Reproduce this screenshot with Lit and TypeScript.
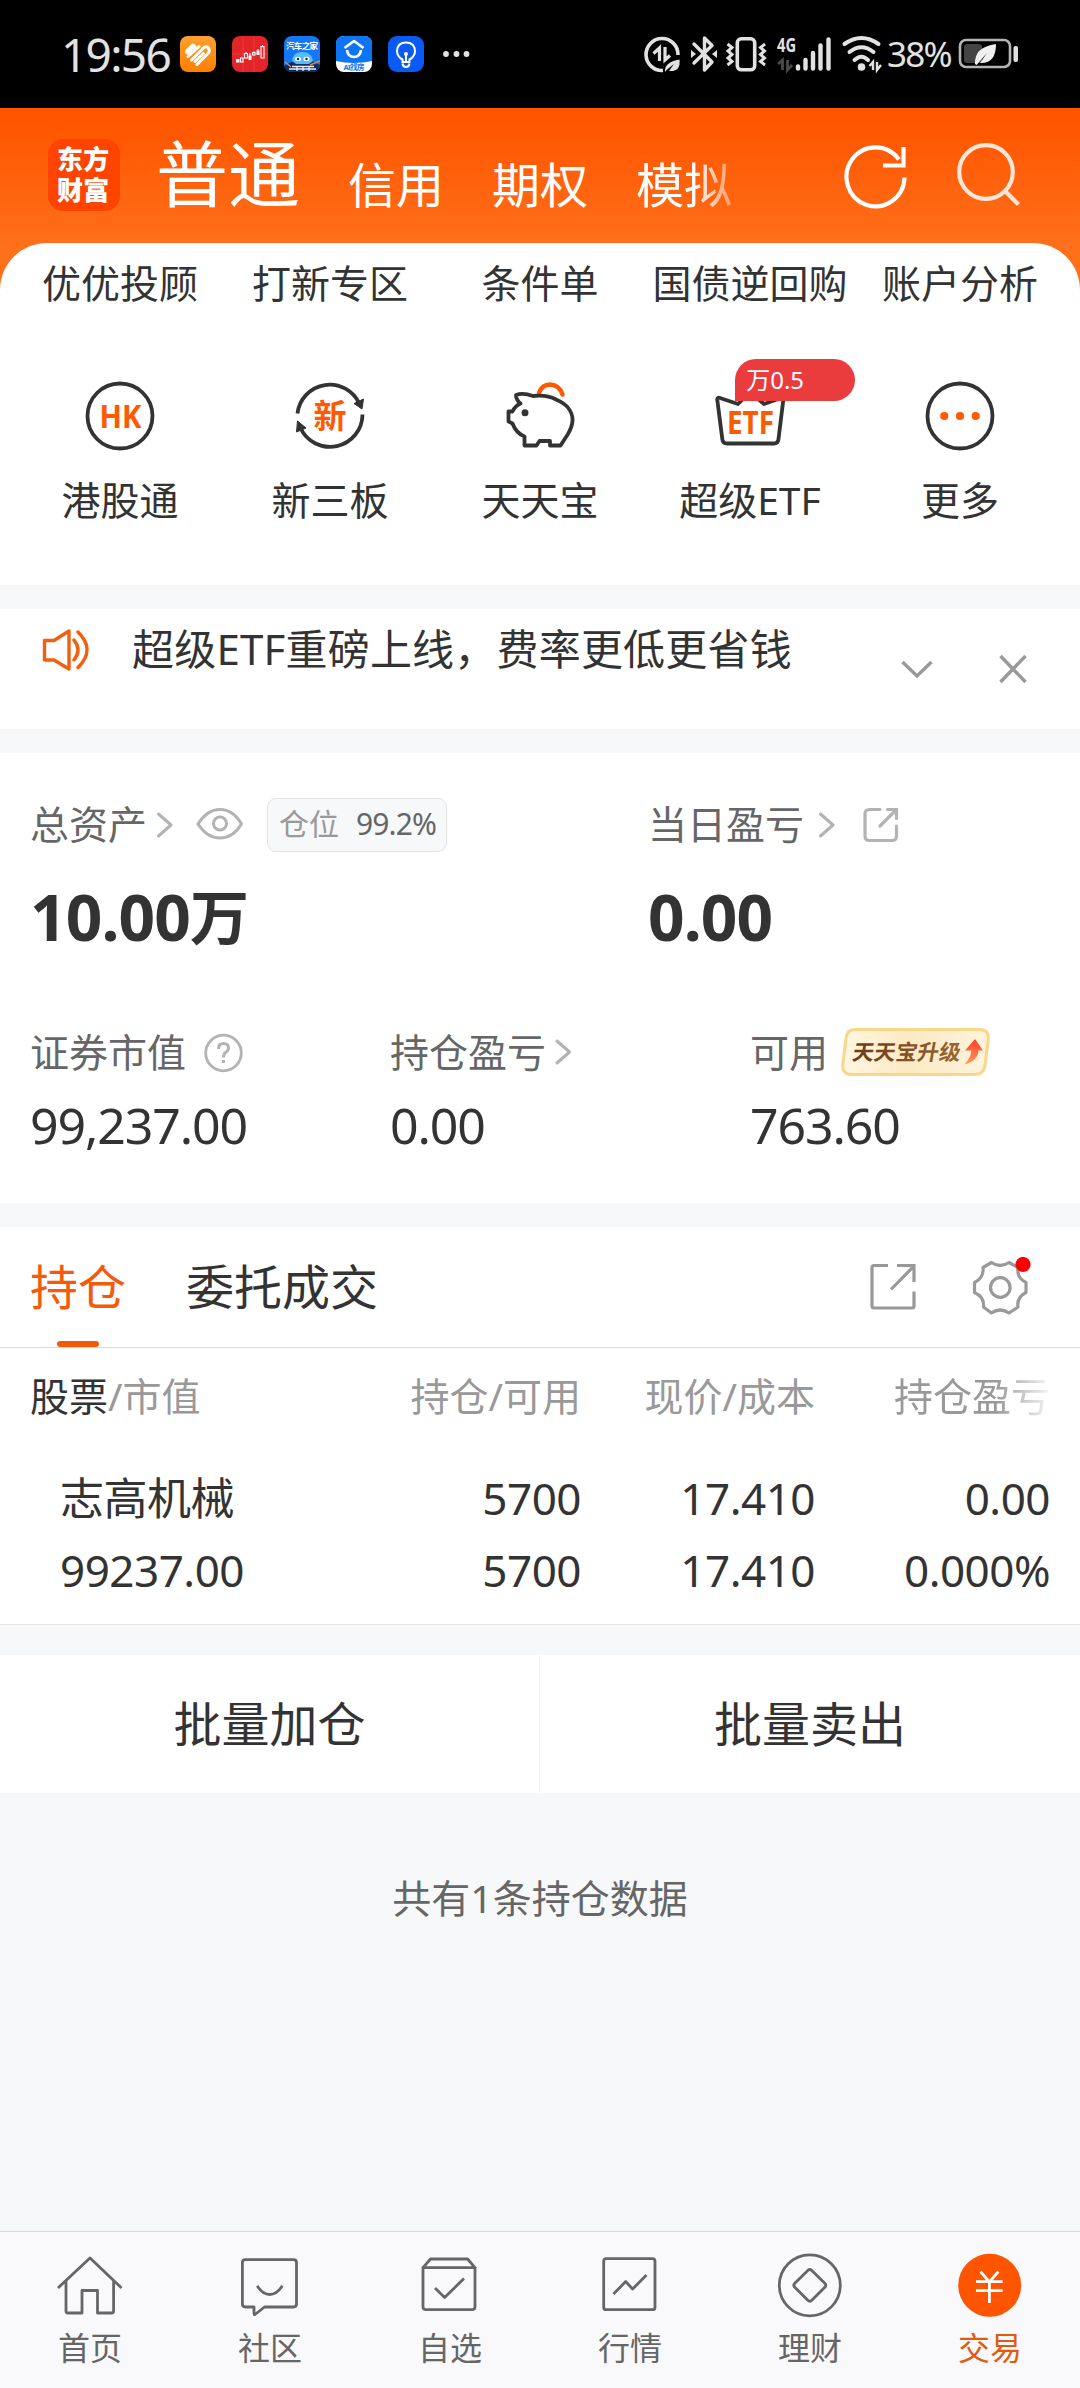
import { LitElement, html, css, svg } from "lit";
import { customElement } from "lit/decorators.js";
import { classMap } from "lit/directives/class-map.js";

const FONT = css`"Noto Sans", "Noto Sans CJK SC", sans-serif`;

@customElement("status-bar")
class StatusBar extends LitElement {
  static styles = css`
    :host { display: flex; height: 108px; background: #000; color: #e2e2e2; font-family: ${FONT}; align-items: center; justify-content: space-between; padding: 0 60px 0 61px; box-sizing: border-box; }
    svg { display: block; flex: none; overflow: visible; }
    .left, .right { display: flex; align-items: center; }
    .time { font-size: 46px; line-height: 60px; letter-spacing: -1.7px; width: 119px; white-space: nowrap; }
    .apps { display: flex; gap: 16px; }
    .dots { margin-left: 18px; }
    .bt { margin-left: 11px; }
    .vib { margin-left: 9px; }
    .cell { margin-left: 10px; }
    .wifi { margin-left: 9px; }
    .pct { font-size: 35px; line-height: 44px; letter-spacing: -1.8px; margin-left: 4px; width: 71px; white-space: nowrap; }
    text { font-family: ${FONT}; font-weight: 700; }
  `;
  render() {
    return html`
      <div class="left">
        <div class="time">19:56</div>
        <div class="apps">
          <svg width="36" height="36" viewBox="0 0 36 36">
            <defs><linearGradient id="o" x1="0" y1="0" x2="0" y2="1"><stop offset="0" stop-color="#ffa031" /><stop offset="1" stop-color="#ff7f00" /></linearGradient></defs>
            <rect width="36" height="36" rx="8" fill="url(#o)" />
            <g stroke="#fff" stroke-linecap="round" fill="none">
              <path d="M8.500 15.500L13 11" stroke-width="6.500" />
              <path d="M8 20.500L19 10.500M11.500 24L22.500 13Q26 9 28.500 12Q30.500 15 27.500 18L17 28.500M15 25.500L23.500 17.500" stroke-width="3" />
            </g>
          </svg>
          <svg width="36" height="36" viewBox="0 0 36 36">
            <rect width="36" height="36" rx="8" fill="#e32428" />
            <path d="M11 0V36M22 0V36M0 18H36" stroke="#ec4a4a" stroke-width=".6" />
            <g fill="#fff"><rect x="4" y="23" width="3.500" height="3.500" /><rect x="16.500" y="19.500" width="3" height="4.500" /><rect x="24.500" y="14.500" width="3" height="4.500" /><path d="M14 16V18M22 15.500V17M30.500 9V11M26 13V15M18 17V24" stroke="#fff" /></g>
            <g fill="none" stroke="#fff" stroke-width="1.100"><rect x="8.500" y="22" width="2.500" height="4" /><rect x="12.500" y="17.500" width="3" height="4.500" /><rect x="20.500" y="16.500" width="2.500" height="2.500" /><rect x="29" y="10.500" width="3" height="11.500" /></g>
          </svg>
          <svg width="36" height="36" viewBox="0 0 36 36">
            <defs><clipPath id="c"><rect width="36" height="36" rx="8" /></clipPath></defs>
            <g clip-path="url(#c)">
              <rect width="36" height="36" fill="#1677f5" />
              <path d="M0 30L9 25H28L36 29V36H0Z" fill="#0b2d63" />
              <path d="M8 25Q9 16 18 16Q28 16 29 25L25 28H12Z" fill="#55bdf7" />
              <ellipse cx="14" cy="23" rx="3" ry="2.200" fill="#fff" /><ellipse cx="22.500" cy="23" rx="3" ry="2.200" fill="#fff" />
              <circle cx="14" cy="23" r="1.200" fill="#123" /><circle cx="22.500" cy="23" r="1.200" fill="#123" />
              <path d="M1 26L7 31M36 25L26 29" stroke="#e08b3c" stroke-width="1.400" />
              <text x="2" y="12.500" font-size="8.500" fill="#fff" textLength="32">汽车之家</text>
              <path d="M5 33H32M8 30.500H30M13 30V35M19 30V35M25 30V35" stroke="#e8eef7" stroke-width="1.300" />
            </g>
          </svg>
          <svg width="36" height="36" viewBox="0 0 36 36">
            <rect width="36" height="36" rx="8" fill="#fff" />
            <path d="M0 25V8Q0 0 8 0H28Q36 0 36 8V25Q18 29 0 25Z" fill="#0d74f7" />
            <path d="M8.500 12L18 5L27.500 12" fill="none" stroke="#fff" stroke-width="2.600" stroke-linejoin="round" />
            <path d="M11 14Q12 21 18 21Q24 21 25 14" fill="none" stroke="#fff" stroke-width="2.600" />
            <text x="7.500" y="34" font-size="7.500" fill="#0d74f7" textLength="21">AI找房</text>
          </svg>
          <svg width="36" height="36" viewBox="0 0 36 36">
            <rect width="36" height="36" rx="9" fill="#0a5af5" />
            <path d="M14.500 26V23.500Q9 20.500 9 15Q9.500 6.500 18 6.500Q26.500 6.500 27 15Q27 20.500 21.500 23.500V26ZM18 26V18M14.500 27.500Q15 31 18 31Q21 31 21.500 27.500" fill="none" stroke="#fff" stroke-width="2" />
            <circle cx="18" cy="18" r="2" fill="#fff" />
          </svg>
        </div>
        <svg class="dots" width="30" height="10" viewBox="0 0 30 10" fill="#e2e2e2"><circle cx="4" cy="5" r="2.900" /><circle cx="14.500" cy="5" r="2.900" /><circle cx="24.500" cy="5" r="2.900" /></svg>
      </div>
      <div class="right">
        <svg width="36" height="38" viewBox="0 0 36 38">
          <path d="M19 35.500A16 16 0 1 1 34 20" fill="none" stroke="#e2e2e2" stroke-width="3.600" />
          <path d="M15.500 26V13L9.500 18.500M21 12V25L26 20.500" fill="none" stroke="#e2e2e2" stroke-width="3.200" />
          <path d="M21 37Q20 27 35.500 24.500Q37 37 25 36L30 29L22.500 35Z" fill="#e2e2e2" />
        </svg>
        <svg class="bt" width="26" height="38" viewBox="0 0 26 38">
          <path d="M3 9L21 27L13.500 35V3L21 10.500L3 28" fill="none" stroke="#e2e2e2" stroke-width="3.400" stroke-linejoin="round" stroke-linecap="round" />
          <path d="M0 15L5 19L0 23ZM26 15L21 19L26 23Z" fill="#e2e2e2" />
        </svg>
        <svg class="vib" width="41" height="38" viewBox="0 0 41 38" fill="none" stroke="#e2e2e2">
          <rect x="11.300" y="3.800" width="17.400" height="31" rx="4" stroke-width="3.600" />
          <path d="M1.500 9L6 12.500L2 16L6 19.500L2 23L6 26.500L1.500 30M39 9L34.500 12.500L38.500 16L34.500 19.500L38.500 23L34.500 26.500L39 30" stroke-width="3" />
        </svg>
        <svg class="cell" width="56" height="38" viewBox="0 0 56 38">
          <text x="0" y="17" font-size="20" fill="#e2e2e2" textLength="19" lengthAdjust="spacingAndGlyphs">4G</text>
          <path d="M5.500 35V25L1 29M10.500 25V35L15 30" fill="none" stroke="#4a4a4a" stroke-width="2.800" />
          <g stroke="#e2e2e2" stroke-width="4.400" stroke-linecap="round"><path d="M21 31.500V33.500M28.500 25V33.500M36 18V33.500M43.500 10.500V33.500M51.500 4.500V33.500" /></g>
        </svg>
        <svg class="wifi" width="41" height="38" viewBox="0 0 41 38">
          <g fill="none" stroke="#e2e2e2" stroke-width="4" stroke-linecap="round"><path d="M2.500 9Q19.500 -3 36.500 9M7.500 17Q19.500 7.500 31.500 17M12.500 25Q19.500 18.500 26 25" /></g>
          <circle cx="19.500" cy="32" r="3.800" fill="#e2e2e2" />
          <path d="M31 35V27L27.500 31M35 27V35L39 30" fill="none" stroke="#e2e2e2" stroke-width="2.400" />
        </svg>
        <div class="pct">38%</div>
        <svg width="62" height="32" viewBox="0 0 62 32">
          <rect x="2" y="2" width="50" height="27" rx="6" fill="none" stroke="#b4b4b4" stroke-width="2.600" />
          <rect x="6" y="6" width="18" height="19" rx="3" fill="#444" />
          <path d="M17 26Q16 9 38 6Q38 26 22 25L29 15L18.500 27Z" fill="#f0f0f0" />
          <rect x="55.500" y="8" width="4.500" height="16" rx="2" fill="#e2e2e2" />
        </svg>
      </div>
    `;
  }
}

interface NavItem { label: string; icon: unknown; active?: boolean }

@customElement("bottom-nav")
class BottomNav extends LitElement {
  static styles = css`
    :host { display: grid; grid-template-columns: repeat(6, 1fr); height: 157px; box-sizing: border-box; background: #f9f9fb; border-top: 1px solid #dcdcdc; font-family: ${FONT}; }
    .item { display: flex; flex-direction: column; align-items: center; padding-top: 17px; color: #666; }
    .item svg { display: block; fill: none; stroke: #666; stroke-width: 2.800; stroke-linecap: square; stroke-linejoin: round; }
    .label { font-size: 32px; line-height: 40px; margin-top: 7px; }
    .active { color: #e2590f; }
    .active svg { stroke: #fff; stroke-linecap: butt; }
  `;
  private items: NavItem[] = [
    { label: "首页", icon: svg`<path d="M5 38L36 9L66.500 38M12 33V62Q12 64 14 64H28V41.500H43.500V64H57.600Q59.600 64 59.600 62V33" />` },
    { label: "社区", icon: svg`<path d="M11.400 10.700H59.500Q62.500 10.700 62.500 13.700V55Q62.500 58 59.500 58H30.500L21 65.500Q20 66 20 64V58H11.400Q8.400 58 8.400 55V13.700Q8.400 10.700 11.400 10.700Z" /><path d="M24 38Q29 45.500 35.700 45.500Q42.500 45.500 47.500 38" />` },
    { label: "自选", icon: svg`<path d="M9 18.700H61V57.700Q61 60.700 58 60.700H12Q9 60.700 9 57.700V18.700L16.500 10H53.600L61 18.700M22 40L30.600 48.500L49 30.500" />` },
    { label: "行情", icon: svg`<rect x="9.700" y="9.700" width="51.300" height="51" rx="2.500" /><path d="M20.500 44L31.700 32.500L38.600 40L51.500 27" />` },
    { label: "理财", icon: svg`<circle cx="35.800" cy="36.300" r="30.500" /><path d="M33.800 21.500Q35.800 19.500 37.800 21.500L50.800 34.300Q52.800 36.300 50.800 38.300L37.800 51.300Q35.800 53.300 33.800 51.300L20.800 38.300Q18.800 36.300 20.800 34.300Z" />` },
    { label: "交易", active: true, icon: svg`<circle cx="35.700" cy="36.300" r="31.500" fill="#ff5500" stroke="none" /><path d="M22 32.700H48.700M22 41.700H48.700M35.400 32.700V54M26.500 22.700L35.400 33L44.300 22.700" />` },
  ];
  render() {
    return this.items.map(
      (i) => html`<div class=${classMap({ item: true, active: !!i.active })}>
        <svg width="72" height="72" viewBox="0 0 72 72">${i.icon}</svg>
        <div class="label">${i.label}</div>
      </div>`
    );
  }
}

@customElement("app-root")
class AppRoot extends LitElement {
  static styles = css`
    :host { display: flex; flex-direction: column; width: 1080px; height: 2388px; overflow: hidden; background: #f7f8fa; font-family: ${FONT}; color: #333; font-size: 39px; }
    svg { display: block; flex: none; }
    status-bar, bottom-nav, .hero, .section { flex: none; }

    .hero { background: linear-gradient(#ff5500 0, #ff5500 15px, #ff701a 140px); }
    .top { height: 135px; display: flex; align-items: flex-start; padding-left: 48px; color: #fff; box-sizing: border-box; }
    .logo { width: 72px; height: 72px; box-sizing: border-box; padding: 5px 10px 0 9px; margin-top: 31px; border-radius: 15px; background: #ff4400; font-size: 26px; line-height: 30.500px; font-weight: 900; letter-spacing: .2px; word-break: break-all; flex: none; }
    .tabs { display: flex; gap: 48px; margin-left: 36px; width: 600px; white-space: nowrap; font-size: 48px; line-height: 60px; padding-top: 47px; box-sizing: border-box; }
    .big { font-size: 72px; line-height: 80px; margin-top: -22px; }
    .fade { -webkit-mask-image: linear-gradient(90deg, #000 60%, rgba(0, 0, 0, .35)); mask-image: linear-gradient(90deg, #000 60%, rgba(0, 0, 0, .35)); }
    .refresh { margin: 31px 0 0 84px; }
    .search { margin: 31px 0 0 39px; }

    .menu { background: #fff; border-radius: 47px 47px 0 0; height: 342px; box-sizing: border-box; padding: 15px 15px 0; }
    .grid { display: grid; grid-template-columns: repeat(5, 210px); justify-items: center; white-space: nowrap; line-height: 50px; }
    .icons { margin-top: 70px; }
    .cell { position: relative; display: flex; flex-direction: column; align-items: center; }
    .cell .name { margin-top: 21px; }
    .cell text { font-weight: 700; fill: #ff5a00; }
    .ribbon { position: absolute; left: 56px; top: -19px; width: 120px; height: 42px; box-sizing: border-box; padding-left: 11px; background: #ea3c3c; color: #fff; border-radius: 21px 21px 21px 0; font-size: 24px; line-height: 41px; }

    .section { background: #fff; margin-top: 24px; }
    .notice { height: 120px; display: flex; align-items: flex-start; box-sizing: border-box; padding: 20px 50px 0 42px; font-size: 42px; line-height: 40px; }
    .notice .msg { margin-left: 42px; width: 768px; white-space: nowrap; letter-spacing: .2px; }
    .notice .down { margin-top: 30px; }
    .notice .close { margin: 24px 0 0 64px; }

    .assets { height: 450px; box-sizing: border-box; padding: 44px 30px 0; color: #666; line-height: 54px; }
    .two { display: grid; grid-template-columns: 618px 1fr; }
    .three { display: grid; grid-template-columns: 360px 360px 1fr; margin-top: 68px; }
    .row { display: flex; align-items: center; height: 54px; white-space: nowrap; }
    .eye { margin-left: 20px; }
    .pos { display: flex; margin-left: 24px; width: 180px; height: 54px; box-sizing: border-box; border: 1px solid #e3e3e6; border-radius: 9px; background: #f7f8fa; font-size: 30px; line-height: 50px; padding-left: 11px; color: #999; margin-top: 2px; }
    .pos .num { color: #666; margin-left: 17px; font-size: 30px; letter-spacing: -.9px; }
    .total { font-size: 64px; font-weight: 700; color: #333; line-height: 80px; margin-top: 26px; letter-spacing: -.9px; display: flex; }
    .total .unit { font-size: 59px; }
    .value { font-size: 50px; color: #333; line-height: 60px; margin-top: 16px; letter-spacing: -1.100px; }
    .up { margin-left: 13px; width: 149px; height: 50px; }
    .up text { font-weight: 700; font-size: 21.500px; }

    .hold { height: 398px; box-sizing: border-box; border-bottom: 1px solid #e6e6e6; }
    .bar { height: 121px; display: flex; box-sizing: border-box; border-bottom: 1px solid #dcdcdc; padding: 0 48px 0 30px; font-size: 48px; line-height: 120px; }
    .tab { margin-right: 60px; height: 120px; }
    .on { color: #f45a0a; display: flex; flex-direction: column; align-items: center; }
    .on i { width: 42px; height: 6px; border-radius: 3px; background: #f45a0a; margin-top: -6px; }
    .tools { display: flex; margin-left: auto; padding-top: 30px; gap: 54px; }
    .table { display: grid; grid-template-columns: 252px 299px 234px 235px; padding: 0 30px; text-align: right; white-space: nowrap; }
    .table div:first-child { text-align: left; }
    .head { color: #999; line-height: 50px; padding-top: 23px; }
    .head b { font-weight: 400; color: #333; }
    .head .fadeout { -webkit-mask-image: linear-gradient(90deg, #000 65%, rgba(0, 0, 0, .1)); mask-image: linear-gradient(90deg, #000 65%, rgba(0, 0, 0, .1)); }
    .line { font-size: 44px; line-height: 72px; letter-spacing: -.5px; }
    .line div:first-child { padding-left: 30px; }
    .first { margin-top: 41px; }

    .actions { display: grid; grid-template-columns: 1fr 1fr; margin-top: 30px; height: 138px; font-size: 48px; line-height: 138px; text-align: center; background: #fff; flex: none; }
    .actions div:first-child { border-right: 1px solid #f5f5f6; }
    .count { color: #666; text-align: center; line-height: 50px; margin-top: 80px; flex: 1; }
  `;

  render() {
    return html`
      <status-bar></status-bar>
      <div class="hero">
        <div class="top">
          <div class="logo">东方财富</div>
          <div class="tabs"><span class="big">普通</span><span>信用</span><span>期权</span><span class="fade">模拟</span></div>
          <svg class="refresh" width="72" height="72" viewBox="0 0 72 72" fill="none" stroke="#fff" stroke-width="4.200">
            <path d="M64.500 38.500A29 29.500 0 1 1 59 20.500M63.500 8V26.500H43" />
          </svg>
          <svg class="search" width="72" height="72" viewBox="0 0 72 72" fill="none" stroke="#ffe6d8" stroke-width="4.200">
            <circle cx="35" cy="33" r="26.800" /><path d="M54 52L67.500 65.500" />
          </svg>
        </div>
        <div class="menu">
          <div class="grid"><span>优优投顾</span><span>打新专区</span><span>条件单</span><span>国债逆回购</span><span>账户分析</span></div>
          <div class="grid icons">
            <div class="cell">
              <svg width="76" height="76" viewBox="0 0 76 76"><circle cx="38" cy="38" r="32.500" fill="none" stroke="#333" stroke-width="3.800" />
                <text x="17.500" y="49.500" font-size="32" textLength="42" lengthAdjust="spacingAndGlyphs">HK</text></svg>
              <span class="name">港股通</span>
            </div>
            <div class="cell">
              <svg width="76" height="76" viewBox="0 0 76 76"><path d="M5.500 35.500A32.500 32.500 0 0 1 67.500 26M70.500 36.500A32.500 32.500 0 0 1 8.500 50" fill="none" stroke="#333" stroke-width="3.800" />
                <path d="M70 31L62 25.500L71.500 21ZM5.500 43L4.500 54L14 50Z" fill="#333" stroke="#333" />
                <text x="21.500" y="50" font-size="33">新</text></svg>
              <span class="name">新三板</span>
            </div>
            <div class="cell">
              <svg width="76" height="76" viewBox="0 0 76 76" fill="none" stroke-linejoin="round" stroke-linecap="round">
                <path d="M37 15Q40 6.500 48 6.500Q57.500 7 60.500 16.500" stroke="#ff5a00" stroke-width="4.500" />
                <path d="M14 17Q21 14.500 31 18Q45 16.500 54 21.500C65 26 71 34 70.500 43Q70 49 66 56L58.500 67.500H48V63H37.500L34.500 67.500H22.500V58.500Q14 55 10.500 45.500L6.500 43.500V33.500H10.500Q13 28 18.500 25.500Q14 22 14 17Z" stroke="#333" stroke-width="3.800" />
                <circle cx="23" cy="34.700" r="3.500" fill="#333" /></svg>
              <span class="name">天天宝</span>
            </div>
            <div class="cell">
              <svg width="76" height="76" viewBox="0 0 76 76"><path d="M52 26L69 20Q71.500 19.500 71.300 22L66.500 61Q66 65.500 62 65.500H15Q10.800 65.500 10.300 61L5.300 22Q5 19 8 20L26 26L38 14Z" fill="none" stroke="#333" stroke-width="3.800" stroke-linejoin="round" />
                <text x="15" y="55.500" font-size="32" textLength="47" lengthAdjust="spacingAndGlyphs">ETF</text></svg>
              <span class="ribbon">万0.5</span>
              <span class="name">超级ETF</span>
            </div>
            <div class="cell">
              <svg width="76" height="76" viewBox="0 0 76 76"><circle cx="38" cy="38" r="32.500" fill="none" stroke="#333" stroke-width="3.800" />
                <g fill="#ff5a00"><circle cx="22.300" cy="38" r="4.100" /><circle cx="38" cy="38" r="4.100" /><circle cx="53.700" cy="38" r="4.100" /></g></svg>
              <span class="name">更多</span>
            </div>
          </div>
        </div>
      </div>

      <div class="section notice">
        <svg width="48" height="42" viewBox="0 0 48 42" fill="none" stroke="#f0600f" stroke-width="3.400" stroke-linejoin="round" stroke-linecap="round">
          <path d="M2.500 11.500H12L27 2V40L12 31H2.500ZM32 11Q40 21 32 31M36 3Q54 20.500 36 38.500" />
        </svg>
        <div class="msg">超级ETF重磅上线，费率更低更省钱</div>
        <svg class="down" width="34" height="22" viewBox="0 0 34 22" fill="none" stroke="#999" stroke-width="3.400"><path d="M2.500 3L17 17L31.500 3" /></svg>
        <svg class="close" width="30" height="32" viewBox="0 0 30 32" fill="none" stroke="#999" stroke-width="3.400"><path d="M2.500 3L27.500 29M27.500 3L2.500 29" /></svg>
      </div>

      <div class="section assets">
        <div class="two">
          <div>
            <div class="row">总资产
              <svg width="28" height="28" viewBox="-9 0 28 28"><path d="M2.500 4L15 15L2.500 26" fill="none" stroke="#b3b3b3" stroke-width="3" stroke-linecap="round" stroke-linejoin="round" /></svg>
              <svg class="eye" width="48" height="34" viewBox="0 0 48 34" fill="none" stroke="#b3b3b3" stroke-width="3"><path d="M3 17Q12 2.500 25 2.500Q38 2.500 46.500 17Q38 31 25 31Q12 31 3 17Z" /><circle cx="25" cy="16.500" r="6.500" /></svg>
              <div class="pos">仓位<span class="num">99.2%</span></div>
            </div>
            <div class="total"><span>10.00</span><span class="unit">万</span></div>
          </div>
          <div>
            <div class="row">当日盈亏
              <svg width="36" height="28" viewBox="-14 0 36 28"><path d="M2.500 4L15 15L2.500 26" fill="none" stroke="#b3b3b3" stroke-width="3" stroke-linecap="round" stroke-linejoin="round" /></svg>
              <svg width="60" height="38" viewBox="-23 -1 60 38" fill="none" stroke="#b3b3b3" stroke-width="3.200" stroke-linecap="round"><path d="M17 3.500H6.500Q2 3.500 2 8V30Q2 34.500 6.500 34.500H29Q33.500 34.500 33.500 30V20M24.500 3.500H33.500V12.500M33 4L17 20" /></svg>
            </div>
            <div class="total">0.00</div>
          </div>
        </div>
        <div class="three">
          <div>
            <div class="row">证券市值
              <svg width="60" height="42" viewBox="-17 0 60 42" fill="none" stroke="#b3b3b3" stroke-width="2.800"><circle cx="20.500" cy="22" r="17.800" /><path d="M15.500 18Q15.500 12.500 20.500 12.500Q25.500 12.500 25.500 17Q25.500 19.500 22.500 21.500Q20.500 23 20.500 26.500M20.500 29V32" stroke-width="3" /></svg>
            </div>
            <div class="value">99,237.00</div>
          </div>
          <div>
            <div class="row">持仓盈亏
              <svg width="28" height="28" viewBox="-8 0 28 28"><path d="M3 3L15.500 14L3 25" fill="none" stroke="#b3b3b3" stroke-width="3" stroke-linecap="round" stroke-linejoin="round" /></svg>
            </div>
            <div class="value">0.00</div>
          </div>
          <div>
            <div class="row">可用
              <svg class="up" viewBox="0 0 149 50">
                <defs>
                  <linearGradient id="bg"><stop offset="0" stop-color="#fff6e2" /><stop offset=".45" stop-color="#fdeac4" /><stop offset="1" stop-color="#fff3dc" /></linearGradient>
                  <linearGradient id="tx" x1="0" y1="0" x2="1" y2="0"><stop offset="0" stop-color="#6b3c1c" /><stop offset="1" stop-color="#9b6630" /></linearGradient>
                  <linearGradient id="ar" x1="0" y1="0" x2="0" y2="1"><stop offset="0" stop-color="#ff3f28" /><stop offset="1" stop-color="#ff9a5c" /></linearGradient>
                </defs>
                <path d="M14 2.500H138Q148 2.500 147.300 12L144 38Q143 47.500 134 47.500H11Q1 47.500 1.700 38L5 12Q5.500 2.500 14 2.500Z" fill="url(#bg)" stroke="#f8d789" stroke-width="3" />
                <text x="0" y="0" transform="translate(10.500 33) skewX(-10)" fill="url(#tx)" textLength="108">天天宝升级</text>
                <path d="M134 12L142 23.500H137.500Q137 34 123 37.500Q129.500 32 130.500 23.500H124Z" fill="url(#ar)" />
              </svg>
            </div>
            <div class="value">763.60</div>
          </div>
        </div>
      </div>

      <div class="section hold">
        <div class="bar">
          <div class="tab on">持仓<i></i></div>
          <div class="tab">委托成交</div>
          <div class="tools">
            <svg width="50" height="60" viewBox="0 0 50 60" fill="none" stroke="#999" stroke-width="3.200"><path d="M20 8.500H6Q4 8.500 4 10.500V49Q4 51 6 51H44Q46 51 46 49V34.500M29 8.500H46V25M45.500 9.500L23 32.500" /></svg>
            <svg width="60" height="60" viewBox="0 0 60 60"><g fill="none" stroke="#999" stroke-width="3.200" stroke-linejoin="round">
                <path d="M19.500 5.500Q28 11.500 37 5.500L46 10.500Q44.500 21 54 25.500V35.500Q44.500 40 46 50L37 56Q28 50 19.500 56L11.500 50Q12.500 40 2.500 35.500V25.500Q12 21 11 10.500Z" /><circle cx="28.300" cy="30.500" r="9.800" /></g>
              <circle cx="51" cy="7.500" r="7.600" fill="#f00" /></svg>
          </div>
        </div>
        <div class="table head">
          <div><b>股票</b>/市值</div><div>持仓/可用</div><div>现价/成本</div><div><span class="fadeout">持仓盈亏</span></div>
        </div>
        <div class="table line first"><div>志高机械</div><div>5700</div><div>17.410</div><div>0.00</div></div>
        <div class="table line"><div>99237.00</div><div>5700</div><div>17.410</div><div>0.000%</div></div>
      </div>

      <div class="actions"><div>批量加仓</div><div>批量卖出</div></div>
      <div class="count">共有1条持仓数据</div>
      <bottom-nav></bottom-nav>
    `;
  }
}
